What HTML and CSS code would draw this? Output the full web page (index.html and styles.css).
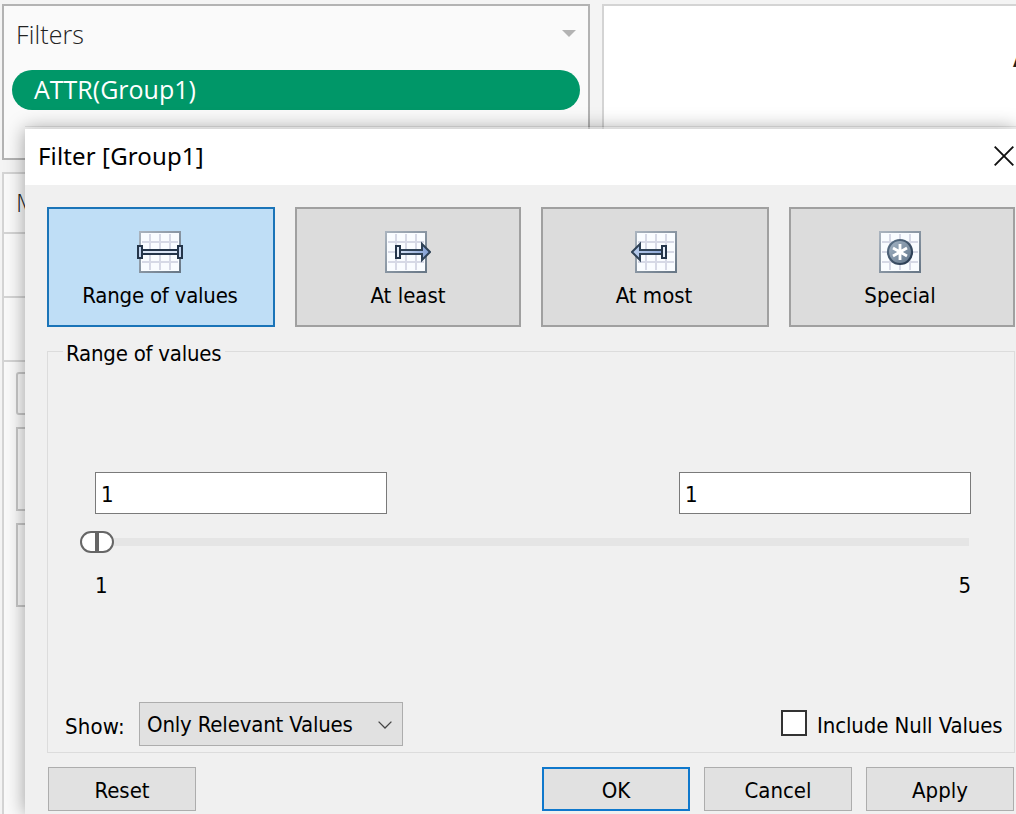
FILE: index.html
```html
<!DOCTYPE html>
<html lang="en">
<head>
<meta charset="utf-8">
<title>Filter [Group1]</title>
<link rel="stylesheet" href="styles.css">
</head>
<body>
<svg class="defs" width="0" height="0">
  <defs>
    <linearGradient id="edge" x1="0" y1="0" x2="1" y2="1"><stop offset="0" stop-color="#a9b3be"/><stop offset="1" stop-color="#687786"/></linearGradient>
    <linearGradient id="shaft" x1="0" y1="0" x2="1" y2="0"><stop offset="0" stop-color="#d3e1f6"/><stop offset="1" stop-color="#7e9bd0"/></linearGradient>
    <linearGradient id="shaftLeft" x1="0" y1="0" x2="1" y2="0"><stop offset="0" stop-color="#b9cdec"/><stop offset="1" stop-color="#8ea9d8"/></linearGradient>
    <linearGradient id="ball" x1="0" y1="0" x2="1" y2="1"><stop offset="0" stop-color="#a7b6c6"/><stop offset="1" stop-color="#5f7388"/></linearGradient>
    <linearGradient id="ring" x1="0" y1="0" x2="1" y2="1"><stop offset="0" stop-color="#5d7288"/><stop offset="1" stop-color="#22354b"/></linearGradient>
    <symbol id="grid" viewBox="0 0 42 42">
      <rect x="1" y="1" width="40" height="40" fill="#f9fcff" stroke="url(#edge)" stroke-width="2"/>
      <path d="M11 3v36M21 3v36M31 3v36M3 11h36M3 21h36M3 31h36" stroke="#d6d9e6" stroke-width="2"/>
    </symbol>
  </defs>
</svg>
<div class="workspace">
  <div class="shelves">
    <section class="card filters">
      <header class="card-head"><span class="card-title">Filters</span><i class="caret"></i></header>
      <div class="pill"><span>ATTR(Group1)</span></div>
    </section>
    <section class="card marks">
      <div class="marks-head">Marks</div>
      <div class="marks-row"></div>
      <div class="marks-row"></div>
      <div class="marks-buttons">
        <div class="marks-type"></div>
        <div class="marks-cell"></div>
        <div class="marks-cell"></div>
      </div>
    </section>
  </div>
  <div class="sheet"><span class="sheet-text">A</span></div>
</div>

<div class="dialog">
  <header class="titlebar">
    <span class="title">Filter [Group1]</span>
    <svg class="close" width="20" height="20" viewBox="0 0 20 20"><path d="M.7 .7L19.3 19.3M19.3 .7L.7 19.3" stroke="#111" stroke-width="1.9"/></svg>
  </header>
  <div class="body">
    <div class="tabs">
      <div class="tab selected">
        <svg width="46" height="42" viewBox="0 0 46 42"><use href="#grid" x="2" width="42" height="42"/>
          <path d="M5 19h36v4H5z" fill="#d9e4f5" stroke="#24354a" stroke-width="2"/>
          <path d="M1 15h4v12H1zM41 15h4v12h-4z" fill="#c4d5ef" stroke="#24354a" stroke-width="2"/></svg>
        <span class="t-range">Range of values</span>
      </div>
      <div class="tab narrow least">
        <svg width="46" height="42" viewBox="0 0 46 42"><use href="#grid" width="42" height="42"/>
          <path d="M15 19h22v-6l8 8l-8 8v-6H15z" fill="url(#shaft)" stroke="#2f4257" stroke-width="2"/>
          <path d="M11 15h4v12h-4z" fill="#e4edf9" stroke="#24354a" stroke-width="2"/></svg>
        <span>At least</span>
      </div>
      <div class="tab">
        <svg width="46" height="42" viewBox="0 0 46 42"><use href="#grid" x="4" width="42" height="42"/>
          <path d="M31 19H9v-6l-8 8l8 8v-6h22z" fill="url(#shaftLeft)" stroke="#2f4257" stroke-width="2"/>
          <path d="M31 15h4v12h-4z" fill="#e4edf9" stroke="#24354a" stroke-width="2"/></svg>
        <span>At most</span>
      </div>
      <div class="tab narrow special">
        <svg width="42" height="42" viewBox="0 0 42 42"><use href="#grid" width="42" height="42"/>
          <circle cx="21" cy="21" r="12" fill="url(#ball)" stroke="url(#ring)" stroke-width="2.2"/>
          <path d="M21 13v16M14 17l14 8M28 17l-14 8" stroke="#fff" stroke-width="2.8"/></svg>
        <span>Special</span>
      </div>
    </div>

    <div class="group">
      <div class="legend"><span class="t-range">Range of values</span></div>
      <div class="inputs"><div class="field">1</div><div class="field">1</div></div>
      <div class="slider">
        <svg class="thumb" width="34" height="22" viewBox="0 0 34 22"><rect x="1" y="1" width="32" height="20" rx="10" fill="#fff" stroke="#666" stroke-width="2"/><path d="M17 1v20" stroke="#666" stroke-width="4"/></svg>
        <div class="track"></div>
      </div>
      <div class="limits"><span>1</span><span>5</span></div>
      <div class="options">
        <span class="t-show">Show:</span>
        <div class="select"><span class="t-only">Only Relevant Values</span>
          <svg width="14" height="8" viewBox="0 0 14 8"><path d="M.6 .6L7 7L13.4 .6" fill="none" stroke="#444" stroke-width="1.3"/></svg></div>
        <div class="check"><i class="box"></i><span class="t-null">Include Null Values</span></div>
      </div>
    </div>

    <div class="actions">
      <div class="btn reset"><span>Reset</span></div>
      <div class="btn ok"><span>OK</span></div>
      <div class="btn"><span>Cancel</span></div>
      <div class="btn"><span>Apply</span></div>
    </div>
  </div>
</div>
</body>
</html>
```

FILE: styles.css
```css
* { box-sizing: border-box; }
body {
  margin: 0;
  width: 1016px;
  height: 814px;
  overflow: hidden;
  position: relative;
  background: #f4f4f4;
  color: #000;
  font: 22px/26px "DejaVu Sans Condensed", "DejaVu Sans", sans-serif;
  font-stretch: condensed;
  white-space: nowrap;
}
span { display: block; }
svg { display: block; flex: none; }
.defs { position: absolute; }

.workspace { display: flex; gap: 12px; height: 814px; padding: 4px 0 0 2px; }
.shelves { display: flex; flex-direction: column; gap: 12px; width: 588px; flex: none; }
.card { background: #fafafa; border: 2px solid #d4d4d4; }
.filters { height: 156px; border-color: #b3b3b3; }
.card-head {
  display: flex;
  justify-content: space-between;
  padding: 14px 12px 0 12px;
  height: 64px;
  color: #222;
  font: 300 25px/29px "Open Sans", "Noto Sans", sans-serif;
  letter-spacing: .1px;
}
.caret { margin-top: 10px; width: 14px; height: 7px; background: #b3b3b3; clip-path: polygon(0 0, 100% 0, 50% 100%); }
.pill {
  height: 40px;
  margin: 0 8px;
  padding-left: 22px;
  border-radius: 20px;
  background: #009768;
  color: #fff;
  font: 25px/38px "Open Sans", "Noto Sans", sans-serif;
}
.marks { flex: 1; border-bottom: 0; }
.marks-head {
  height: 60px;
  padding: 14px 0 0 12px;
  border-bottom: 2px solid #d4d4d4;
  color: #222;
  font: 300 25px/29px "Open Sans", "Noto Sans", sans-serif;
}
.marks-row { height: 64px; border-bottom: 2px solid #d4d4d4; }
.marks-buttons { display: flex; flex-direction: column; gap: 12px; padding: 10px 12px; }
.marks-type { height: 43px; border: 2px solid #c8c8c8; border-radius: 3px; }
.marks-cell { height: 84px; border: 2px solid #c8c8c8; }
.sheet { flex: 1; background: #fff; border: 2px solid #d4d4d4; border-right: 0; border-bottom: 0; padding: 37px 0 0 409px; overflow: hidden; }
.sheet-text { color: #222; font: bold 24px/30px "Open Sans", sans-serif; }

.dialog {
  position: absolute;
  left: 25px;
  top: 129px;
  width: 991px;
  height: 685px;
  background: #f0f0f0;
  box-shadow: 0 -2px 0 rgba(255, 255, 255, .45), 0 -3px 0 rgba(0, 0, 0, .08), 0 0 18px rgba(0, 0, 0, .38);
}
.titlebar { display: flex; justify-content: space-between; height: 56px; padding: 11px 2px 0 13px; background: #fff; }
.title { font: 24px/32px "Noto Sans", sans-serif; letter-spacing: .13px; }
.close { margin-top: 6px; }
.body { display: flex; flex-direction: column; padding: 22px 1px 0 22px; }

.tabs { display: flex; gap: 20px; }
.tab {
  display: flex;
  flex-direction: column;
  align-items: center;
  gap: 10px;
  width: 228px;
  height: 120px;
  padding: 22px 2px 0 0;
  background: #dcdcdc;
  border: 2px solid #a0a0a0;
}
.tab.narrow { width: 226px; }
.tab.least { padding-right: 0; }
.tab.special { padding-right: 4px; }
.tab.selected { background: #bfdef6; border-color: #1a74b8; }
.t-range { letter-spacing: -.22px; }

.group { height: 402px; margin-top: 24px; border: 1px solid #dcdcdc; }
.legend { width: 162px; height: 26px; margin: -11px 0 0 15px; padding-left: 3px; background: #f0f0f0; }
.inputs { display: flex; justify-content: space-between; margin: 105px 43px 0 47px; }
.field { width: 292px; height: 42px; padding: 9px 5px; background: #fff; border: 1px solid #7a7a7a; }
.slider { display: flex; align-items: center; margin: 17px 45px 0 32px; }
.track { flex: 1; height: 8px; background: #e5e5e5; }
.limits { display: flex; justify-content: space-between; margin: 20px 43px 0 47px; }
.options { display: flex; margin: 103px 12px 0 17px; }
.t-show { flex: none; width: 74px; padding-top: 12px; letter-spacing: .2px; }
.select {
  flex: none;
  display: flex;
  align-items: center;
  justify-content: space-between;
  width: 264px;
  height: 44px;
  padding: 2px 10px 0 7px;
  background: #e1e1e1;
  border: 1px solid #adadad;
}
.t-only { letter-spacing: -.17px; }
.check { flex: none; display: flex; gap: 10px; margin-left: 378px; padding-top: 8px; }
.box { flex: none; width: 26px; height: 26px; background: #fff; border: 2px solid #333; }
.check .t-null { padding-top: 3px; letter-spacing: -.1px; }

.actions { display: flex; gap: 14px; margin: 14px 0 0 1px; }
.btn { display: flex; justify-content: center; width: 148px; height: 44px; padding-top: 10px; background: #e1e1e1; border: 1px solid #adadad; }
.btn.reset { margin-right: 332px; }
.btn.ok { padding-top: 9px; border: 2px solid #0f78cc; }
```
